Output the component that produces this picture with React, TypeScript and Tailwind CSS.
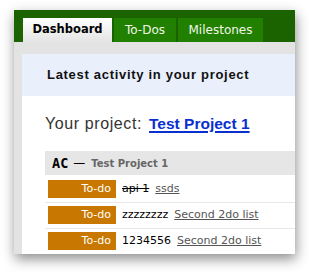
const tabs = [
  { label: "Dashboard", width: "w-[89px]", active: true },
  { label: "To-Dos", width: "w-[62px]", active: false },
  { label: "Milestones", width: "w-[85px]", active: false },
];

const items = [
  { done: true, text: "api 1", list: "ssds" },
  { done: false, text: "zzzzzzzz", list: "Second 2do list" },
  { done: false, text: "1234556", list: "Second 2do list" },
];

export default function App() {
  return (
    <div className="w-[309px] h-[272px] bg-white pt-[10px] pl-[14px]">
      <div className="w-[281px] h-[244px] flex flex-col overflow-hidden bg-[#e3e3e3] shadow-[1px_5px_12px_rgba(0,0,0,0.45)]">
        {/* Tab bar */}
        <div className="h-[32px] shrink-0 bg-[#1b6300] flex items-end gap-[2px] pl-[9px] font-['DejaVu_Sans',sans-serif]">
          {tabs.map((t) =>
            t.active ? (
              <div
                key={t.label}
                className={`${t.width} h-[24px] flex items-center justify-center bg-gradient-to-b from-white to-[#e4e4e4] text-black font-bold text-[11.5px]`}
              >
                {t.label}
              </div>
            ) : (
              <div
                key={t.label}
                className={`${t.width} h-[24px] flex items-center justify-center bg-[#228000] text-[#f0f7ea] text-[12px]`}
              >
                {t.label}
              </div>
            )
          )}
        </div>

        {/* Content */}
        <div className="flex-1 pt-[12px] pl-[8px] flex flex-col">
          <div className="flex-1 bg-white flex flex-col">
            <div className="h-[42px] bg-[#eaf0fb] flex items-center pl-[25px] font-['Liberation_Sans',sans-serif] font-bold text-[13px] tracking-[0.7px] text-[#111]">
              Latest activity in your project
            </div>

            <div className="pl-[23px]">
              <div className="mt-[18px] mb-[17px] h-[20px] leading-[20px] flex items-baseline font-['Liberation_Sans',sans-serif] text-[16px] text-[#333]">
                <span className="tracking-[0.6px]">Your project:</span>
                <a href="#" className="ml-[7px] font-bold text-[15.5px] text-[#0a2fcf] underline decoration-2 underline-offset-2">
                  Test Project 1
                </a>
              </div>

              <div className="h-[24px] bg-[#e6e6e6] flex items-center pl-[7px]">
                <span className="font-['DejaVu_Sans_Mono',monospace] font-bold text-[13.5px] text-black">AC</span>
                <span className="ml-[5px] font-['DejaVu_Sans',sans-serif] text-[12px] text-black">—</span>
                <span className="ml-[6px] font-['DejaVu_Sans',sans-serif] font-bold text-[10px] text-[#666]">Test Project 1</span>
              </div>

              <div className="pt-[2px] font-['DejaVu_Sans',sans-serif] text-[11px]">
                {items.map((it, i) => (
                  <div
                    key={i}
                    className={`flex items-center pt-[3px] pb-[4px] ${i < items.length - 1 ? "border-b border-[#e8e8e8]" : ""}`}
                  >
                    <span className="ml-[3px] w-[68px] h-[18px] leading-[18px] bg-[#c87700] text-white text-right pr-[5px]">
                      To-do
                    </span>
                    <span className={`ml-[6px] text-black ${it.done ? "line-through" : ""}`}>{it.text}</span>
                    <a href="#" className="ml-[6px] text-[#555] underline">
                      {it.list}
                    </a>
                  </div>
                ))}
              </div>
            </div>
          </div>
        </div>
      </div>
    </div>
  );
}
